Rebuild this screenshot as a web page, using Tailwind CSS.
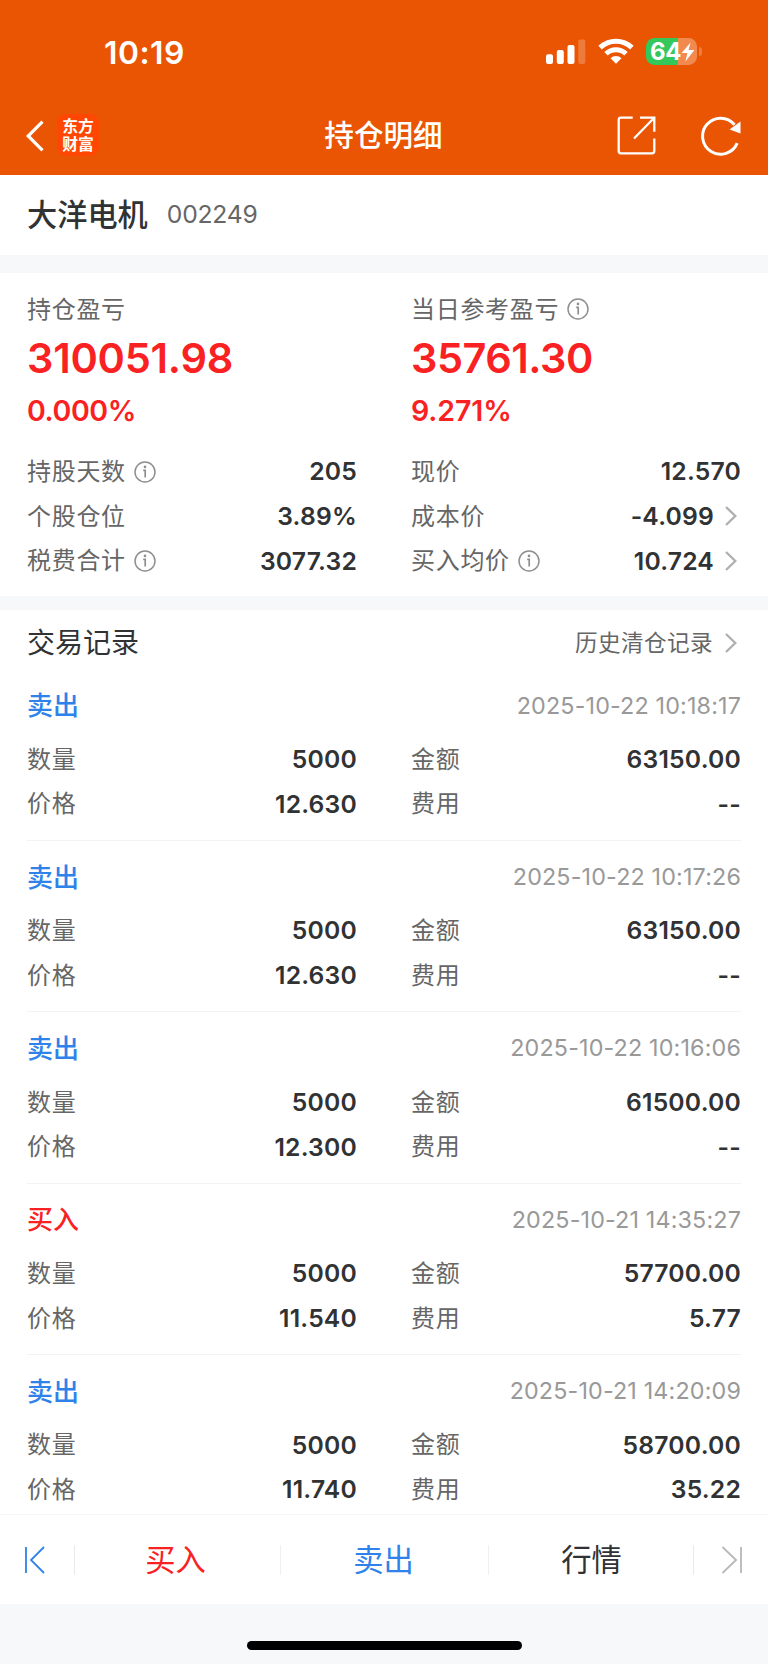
<!DOCTYPE html>
<html lang="zh-CN">
<head>
<meta charset="utf-8">
<title>持仓明细</title>
<script src="https://cdn.jsdelivr.net/npm/@tailwindcss/browser@4"></script>
</head>
<body class="bg-white">
<svg class="hidden">
  <symbol id="info" viewBox="0 0 22 22"><circle cx="11" cy="11" r="10" fill="none" stroke="#8f8f8f" stroke-width="1.5"/><circle cx="11" cy="5.9" r="1.3" fill="#8f8f8f"/><path d="M9.2 9.3h2v7.2" fill="none" stroke="#8f8f8f" stroke-width="1.7"/></symbol>
  <symbol id="chev" viewBox="0 0 12 20"><path d="M1 1l9.3 9L1 19" fill="none" stroke="#b0b0b0" stroke-width="2.4"/></symbol>
</svg>
<div class="w-[768px] h-[1665px] flex flex-col overflow-hidden font-['Noto_Sans_CJK_SC',sans-serif] text-[#303233]">

  <header class="h-[174.5px] shrink-0 bg-[#ea5504] text-white flex flex-col">
    <div class="h-[98px] pt-[37px] pl-[104px] pr-[66px] flex items-start justify-between">
      <span class="font-['Inter',sans-serif] font-semibold text-[31.8px] leading-[32px] tracking-[0.5px]">10:19</span>
      <div class="flex items-start">
        <svg class="w-[40px] h-[26px] mt-[2px]" viewBox="0 0 40 26" fill="#fff"><rect x="0" y="15.3" width="7" height="9.7" rx="2"/><rect x="10.8" y="11" width="7" height="14" rx="2"/><rect x="21.5" y="6" width="7" height="19" rx="2"/><rect x="32.3" y=".5" width="7" height="24.5" rx="2" opacity=".22"/></svg>
        <svg class="w-[36px] h-[26px] ml-[12px] mt-[1px]" viewBox="0 0 36 26"><g fill="none" stroke="#fff" stroke-width="5"><path d="M2.1 9.6a23 23 0 0 1 31.8 0"/><path d="M8 15.8a14.5 14.5 0 0 1 20 0"/></g><path d="M18 25.7l-5.5-5.4a8 8 0 0 1 11 0z" fill="#fff"/></svg>
        <div class="ml-[12px] mt-[1px] flex items-center">
          <div class="relative w-[51px] h-[27px] rounded-[8.5px] bg-linear-to-r from-[#34c759] from-[63.5%] to-[#f28a50] to-[63.5%] flex items-center pl-[4px]">
            <span class="font-['Inter',sans-serif] font-bold text-[24px] leading-[27px] tracking-[-0.4px]">64</span>
            <svg class="absolute left-[35px] top-[4px] w-[14px] h-[20px]" viewBox="0 0 14 20"><path d="M9.6 .5L.6 11h5.8l-2 8.4L13.4 8H7.5z" fill="#fff"/></svg>
          </div>
          <div class="ml-[2px] w-[3px] h-[9px] rounded-r-full bg-[#f07d3e]"></div>
        </div>
      </div>
    </div>
    <div class="h-[76px] pl-[26px] pr-[27px] grid grid-cols-[1fr_auto_1fr] items-center">
      <div class="flex items-center">
        <svg class="w-[18px] h-[32px] mt-[-1px]" viewBox="0 0 18 32"><path d="M16.5 1.7L2.2 16l14.3 14.3" fill="none" stroke="#fff" stroke-width="3.2"/></svg>
        <div class="w-[42px] h-[42px] ml-[13px] mt-[-2px] rounded-[9px] bg-[#ff4703] flex flex-col items-center justify-center font-bold text-[15.8px] leading-[17.5px] pb-[1px]">东方<br>财富</div>
      </div>
      <h1 class="font-medium text-[29.6px] leading-[36px] mt-[-4px]">持仓明细</h1>
      <div class="flex items-center justify-end gap-[45px] mt-[-1px]">
        <svg class="w-[39px] h-[39px]" viewBox="0 0 39 39" fill="none" stroke="#fff" stroke-width="2.3"><path d="M15.7 1.7H4Q1.7 1.7 1.7 4v31q0 2.3 2.3 2.3h31q2.3 0 2.3-2.3V22.5M23 1.7h14.3v14M37 2L17 22.5"/></svg>
        <svg class="w-[40px] h-[40px]" viewBox="0 0 40 40"><path d="M36.2 27.2A18 18 0 1 1 33.5 8.8" fill="none" stroke="#fff" stroke-width="3"/><path d="M39.5 5.5v12l-11-4z" fill="#fff"/></svg>
      </div>
    </div>
  </header>

  <div class="h-[80.5px] shrink-0 pl-[27px] flex items-center">
    <span class="font-medium text-[30.2px] leading-[36px] mt-[-4px]">大洋电机</span>
    <span class="ml-[19px] font-['Inter',sans-serif] text-[24.7px] tracking-[-0.2px] text-[#666]">002249</span>
  </div>
  <div class="h-[18px] shrink-0 bg-[#f7f8fa]"></div>

  <section class="h-[323px] shrink-0 px-[27px] grid grid-cols-[330px_330px] gap-x-[54px] content-start pt-[20px]">
    <div class="flex flex-col">
      <div class="h-[32px] flex items-center text-[24px] tracking-[0.7px] text-[#666] leading-[30px]"><span class="mt-[-3px]">持仓盈亏</span></div>
      <div class="h-[66px] flex items-center font-['Inter',sans-serif] font-semibold text-[41.5px] tracking-[-0.25px] text-[#f92121]">310051.98</div>
      <div class="h-[38px] pt-[2px] flex items-center font-['Inter',sans-serif] font-semibold text-[28.5px] tracking-[-0.4px] text-[#f92121]">0.000%</div>
    </div>
    <div class="flex flex-col">
      <div class="h-[32px] flex items-center text-[24px] tracking-[0.7px] text-[#666] leading-[30px]"><span class="mt-[-3px]">当日参考盈亏</span><svg class="w-[22px] h-[22px] ml-[8px]"><use href="#info"/></svg></div>
      <div class="h-[66px] flex items-center font-['Inter',sans-serif] font-semibold text-[41.5px] tracking-[-0.5px] text-[#f92121]">35761.30</div>
      <div class="h-[38px] pt-[2px] flex items-center font-['Inter',sans-serif] font-semibold text-[28.5px] tracking-[-0.1px] text-[#f92121]">9.271%</div>
    </div>
    <div class="flex flex-col pt-[20px]" id="sumL"></div>
    <div class="flex flex-col pt-[20px]" id="sumR"></div>
  </section>
  <div class="h-[14px] shrink-0 bg-[#f7f8fa]"></div>

  <section class="h-[904px] shrink-0 overflow-hidden px-[27px]">
    <div class="h-[66px] flex items-center justify-between">
      <h2 class="text-[28px] leading-[34px] mt-[-4px]">交易记录</h2>
      <div class="flex items-center pr-[4px] text-[22.6px] tracking-[0.4px] leading-[30px] text-[#666]"><span class="mt-[-2px]">历史清仓记录</span><svg class="w-[12px] h-[20px] ml-[12px] mt-[-1px]"><use href="#chev"/></svg></div>
    </div>
    <div id="records"></div>
  </section>

  <nav class="h-[90px] shrink-0 border-t border-[#f5f5f5] pl-[23px] flex items-center text-[30.3px] leading-[36px]">
    <svg class="w-[22px] h-[28px] shrink-0" viewBox="0 0 22 28" fill="none" stroke="#2e82ea" stroke-width="1.8"><path d="M3 1v26M21 1L8 14l13 13"/></svg>
    <span class="ml-[29px] w-px h-[30px] bg-[#e9e9e9]"></span>
    <span class="w-[205px] text-center text-[#f92121] mt-[-3px] pr-[4px]">买入</span>
    <span class="w-px h-[30px] bg-[#f0f0f0]"></span>
    <span class="w-[207px] text-center text-[#2e82ea] mt-[-3px] pr-[2px]">卖出</span>
    <span class="w-px h-[30px] bg-[#f0f0f0]"></span>
    <span class="w-[204px] text-center mt-[-3px] pl-[1px]">行情</span>
    <span class="w-px h-[30px] bg-[#e9e9e9] mr-[27px]"></span>
    <svg class="w-[22px] h-[28px] shrink-0" viewBox="0 0 22 28" fill="none" stroke="#b8b8b8" stroke-width="1.8"><path d="M20 1v26M1.5 1L15 14L1.5 27"/></svg>
  </nav>
  <div class="h-[60px] shrink-0 bg-[#f7f8fa] flex justify-center pt-[37px]"><div class="w-[275px] h-[9px] rounded-full bg-black"></div></div>
</div>
<script>
const icon = '<svg class="w-[22px] h-[22px] ml-[8px] mt-[1px]"><use href="#info"/></svg>';
const chev = '<svg class="w-[12px] h-[20px] ml-[11px] mr-[4px]"><use href="#chev"/></svg>';
const row = (label, value, info, more) => `<div class="h-[44.7px] flex items-center justify-between leading-[30px]"><div class="flex items-center text-[24px] tracking-[0.7px] text-[#666]"><span class="mt-[-2.6px]">${label}</span>${info ? icon : ''}</div><div class="flex items-center font-['Inter',sans-serif] font-semibold text-[24.7px] tracking-[0.2px]"><span>${value}</span>${more ? chev : ''}</div></div>`;
document.getElementById('sumL').innerHTML = row('持股天数', '205', 1) + row('个股仓位', '3.89%') + row('税费合计', '3077.32', 1);
document.getElementById('sumR').innerHTML = row('现价', '12.570') + row('成本价', '-4.099', 0, 1) + row('买入均价', '10.724', 1, 1);
const data = [
  ['卖出', '2025-10-22 10:18:17', '12.630', '63150.00', '--'],
  ['卖出', '2025-10-22 10:17:26', '12.630', '63150.00', '--'],
  ['卖出', '2025-10-22 10:16:06', '12.300', '61500.00', '--'],
  ['买入', '2025-10-21 14:35:27', '11.540', '57700.00', '5.77'],
  ['卖出', '2025-10-21 14:20:09', '11.740', '58700.00', '35.22'],
];
document.getElementById('records').innerHTML = data.map(([side, time, price, amount, fee], i) => `
  <article class="${i === 0 ? 'h-[164.9px] pt-[9.7px]' : 'h-[171.4px] pt-[16.2px]'} ${i < 4 ? 'border-b border-[#f3f3f3]' : ''}">
    <div class="h-[40px] flex items-center justify-between"><span class="font-medium text-[26px] leading-[32px] mt-[-3px] ${side === '买入' ? 'text-[#f92121]' : 'text-[#2e82ea]'}">${side}</span><span class="font-['Inter',sans-serif] text-[23.3px] leading-[30px] tracking-[0.16px] text-[#999]">${time}</span></div>
    <div class="mt-[11px] grid grid-cols-[330px_330px] gap-x-[54px]">${row('数量', '5000')}${row('金额', amount)}${row('价格', price)}${row('费用', fee)}</div>
  </article>`).join('');
</script>
</body>
</html>
